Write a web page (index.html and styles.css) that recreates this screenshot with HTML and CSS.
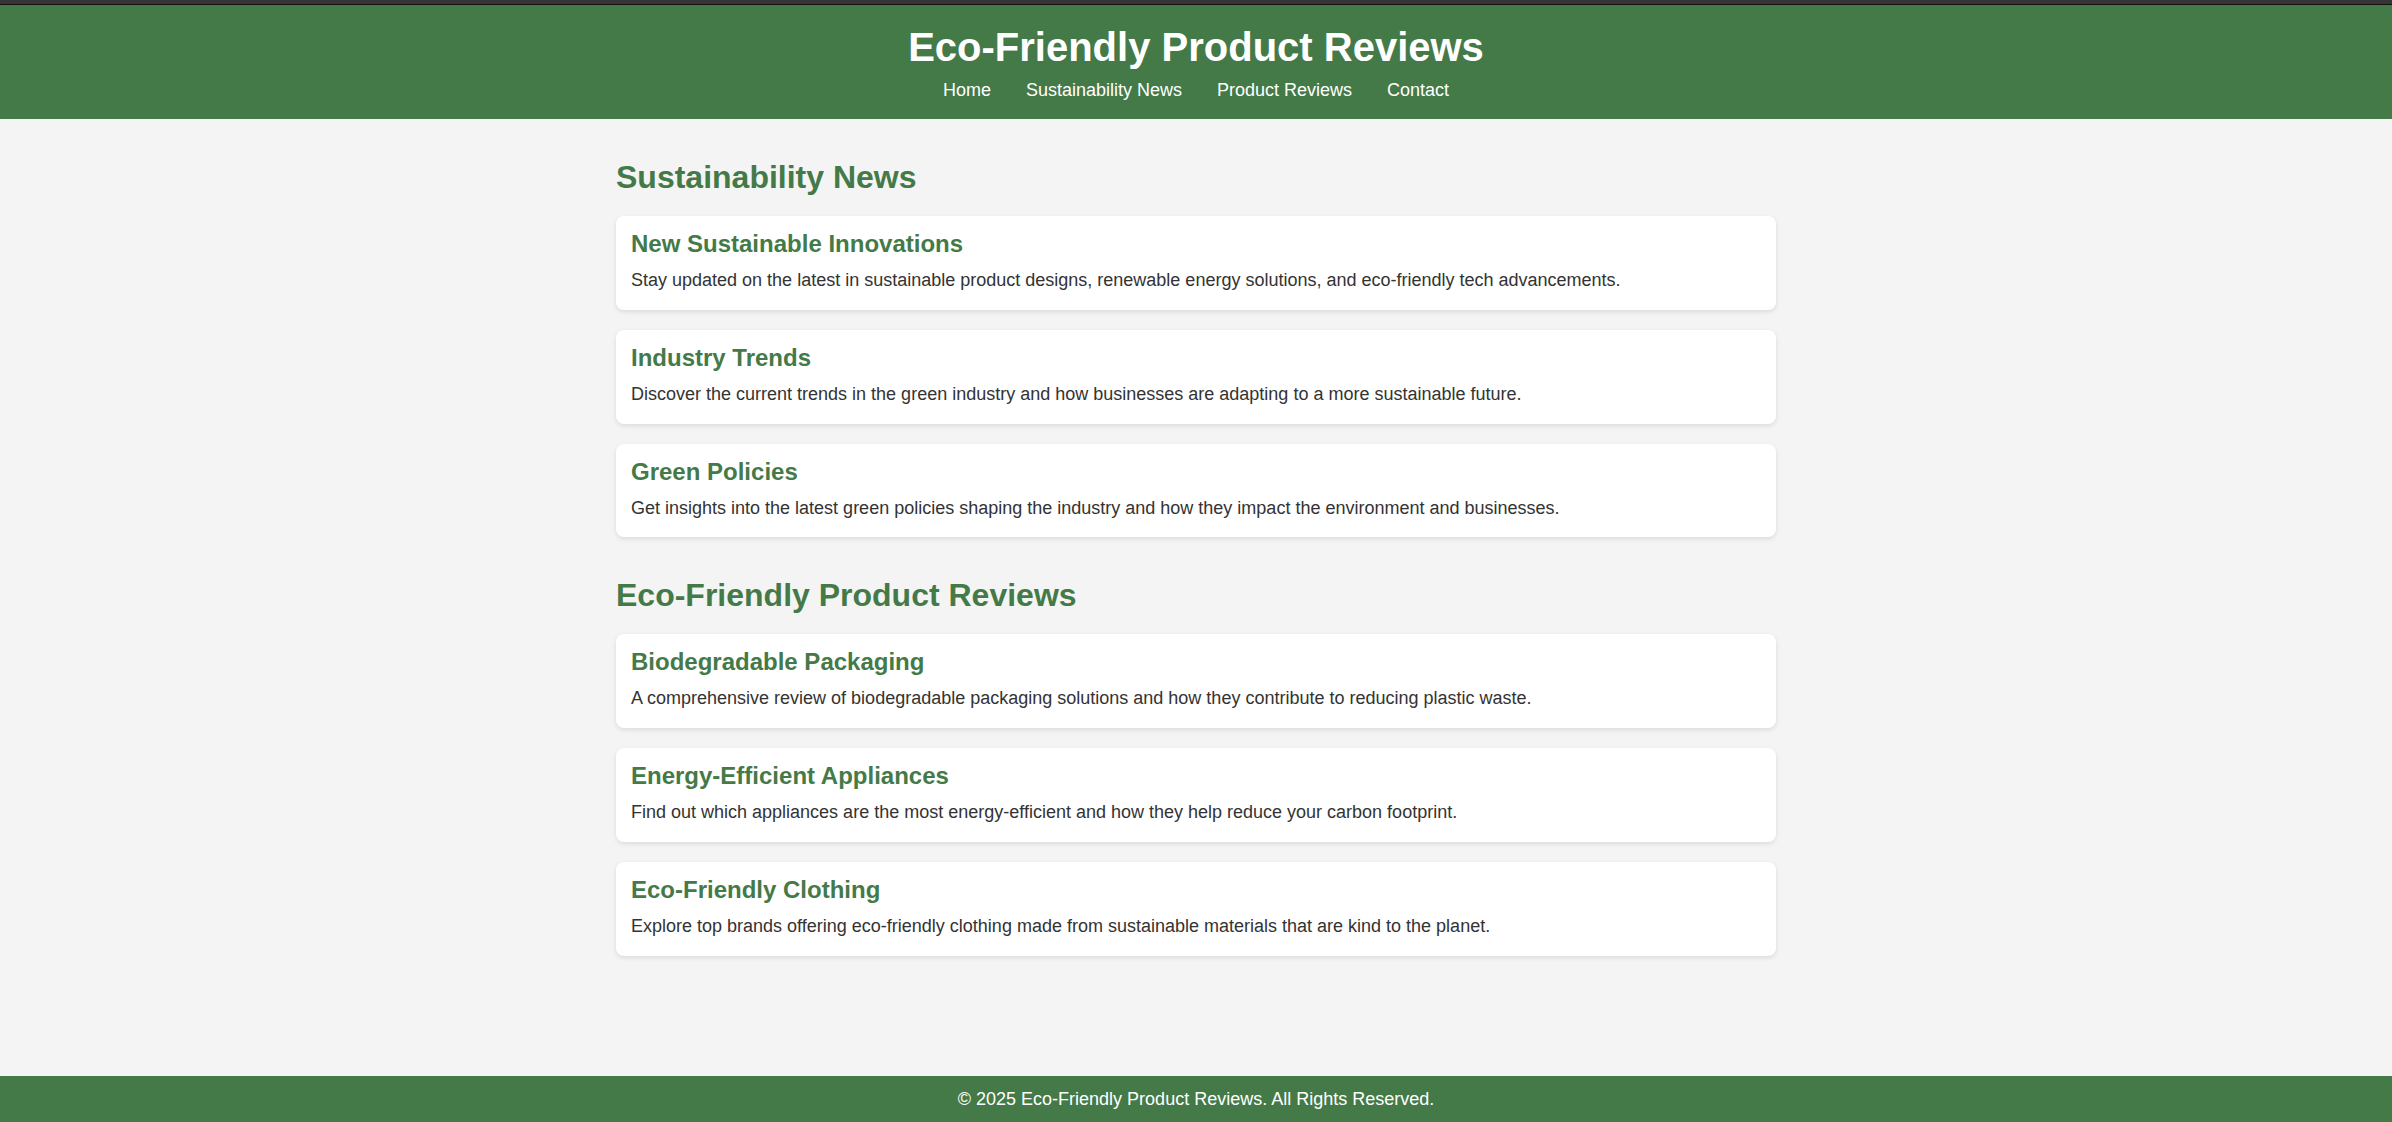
FILE: index.html
```html
<!DOCTYPE html>
<html lang="en">
<head>
<meta charset="utf-8">
<title>Eco-Friendly Product Reviews</title>
<link rel="stylesheet" href="styles.css">
</head>
<body>
<div class="topbar"></div>
<header class="site-header">
  <h1 class="site-title">Eco-Friendly Product Reviews</h1>
  <nav class="site-nav">
    <a href="#">Home</a>
    <a href="#news">Sustainability News</a>
    <a href="#reviews">Product Reviews</a>
    <a href="#">Contact</a>
  </nav>
</header>
<main class="content">
  <section id="news" class="section">
    <h2 class="section-title">Sustainability News</h2>
    <article class="card">
      <h3 class="card-title">New Sustainable Innovations</h3>
      <p class="card-text">Stay updated on the latest in sustainable product designs, renewable energy solutions, and eco-friendly tech advancements.</p>
    </article>
    <article class="card">
      <h3 class="card-title">Industry Trends</h3>
      <p class="card-text">Discover the current trends in the green industry and how businesses are adapting to a more sustainable future.</p>
    </article>
    <article class="card">
      <h3 class="card-title">Green Policies</h3>
      <p class="card-text">Get insights into the latest green policies shaping the industry and how they impact the environment and businesses.</p>
    </article>
  </section>
  <section id="reviews" class="section">
    <h2 class="section-title">Eco-Friendly Product Reviews</h2>
    <article class="card">
      <h3 class="card-title">Biodegradable Packaging</h3>
      <p class="card-text">A comprehensive review of biodegradable packaging solutions and how they contribute to reducing plastic waste.</p>
    </article>
    <article class="card">
      <h3 class="card-title">Energy-Efficient Appliances</h3>
      <p class="card-text">Find out which appliances are the most energy-efficient and how they help reduce your carbon footprint.</p>
    </article>
    <article class="card">
      <h3 class="card-title">Eco-Friendly Clothing</h3>
      <p class="card-text">Explore top brands offering eco-friendly clothing made from sustainable materials that are kind to the planet.</p>
    </article>
  </section>
</main>
<footer class="site-footer">
  <p class="footer-text">&copy; 2025 Eco-Friendly Product Reviews. All Rights Reserved.</p>
</footer>
</body>
</html>
```

FILE: styles.css
```css
* {
  box-sizing: border-box;
}

html, body {
  margin: 0;
  padding: 0;
}

body {
  min-height: 100vh;
  display: flex;
  flex-direction: column;
  background: #f4f4f4;
  color: #333333;
  font-family: "Liberation Sans", Arial, Helvetica, sans-serif;
  font-size: 18px;
}

.topbar {
  height: 5px;
  background: #353535;
  border-bottom: 1px solid #111111;
  flex: none;
}

.site-header {
  flex: none;
  background: #447a48;
  color: #ffffff;
  text-align: center;
  padding: 20px 0 18px;
}

.site-title {
  margin: 0 0 10px;
  font-size: 40px;
  font-weight: bold;
  line-height: normal;
}

.site-nav {
  display: flex;
  justify-content: center;
  gap: 35px;
  line-height: normal;
}

.site-nav a {
  color: #ffffff;
  text-decoration: none;
  font-size: 18px;
}

.content {
  flex: 1;
  width: 100%;
  max-width: 1200px;
  margin: 0 auto;
  padding: 20px 20px;
}

.section {
  display: flow-root;
}

.section-title {
  margin: 20px 0 20px;
  color: #447a48;
  font-size: 32px;
  font-weight: bold;
  line-height: normal;
}

.card {
  background: #ffffff;
  border-radius: 8px;
  box-shadow: 0 2px 5px rgba(0, 0, 0, 0.1);
  padding: 14px 15px 15px;
  margin-bottom: 20px;
}

.card-title {
  margin: 0 0 8px;
  color: #447a48;
  font-size: 24px;
  font-weight: bold;
  line-height: normal;
}

.card-text {
  margin: 0;
  font-size: 18px;
  line-height: 1.6;
  color: #333333;
}

.site-footer {
  flex: none;
  background: #447a48;
  color: #ffffff;
  text-align: center;
  padding: 12px 0;
}

.footer-text {
  margin: 0;
  font-size: 18px;
  line-height: 22px;
}
```
